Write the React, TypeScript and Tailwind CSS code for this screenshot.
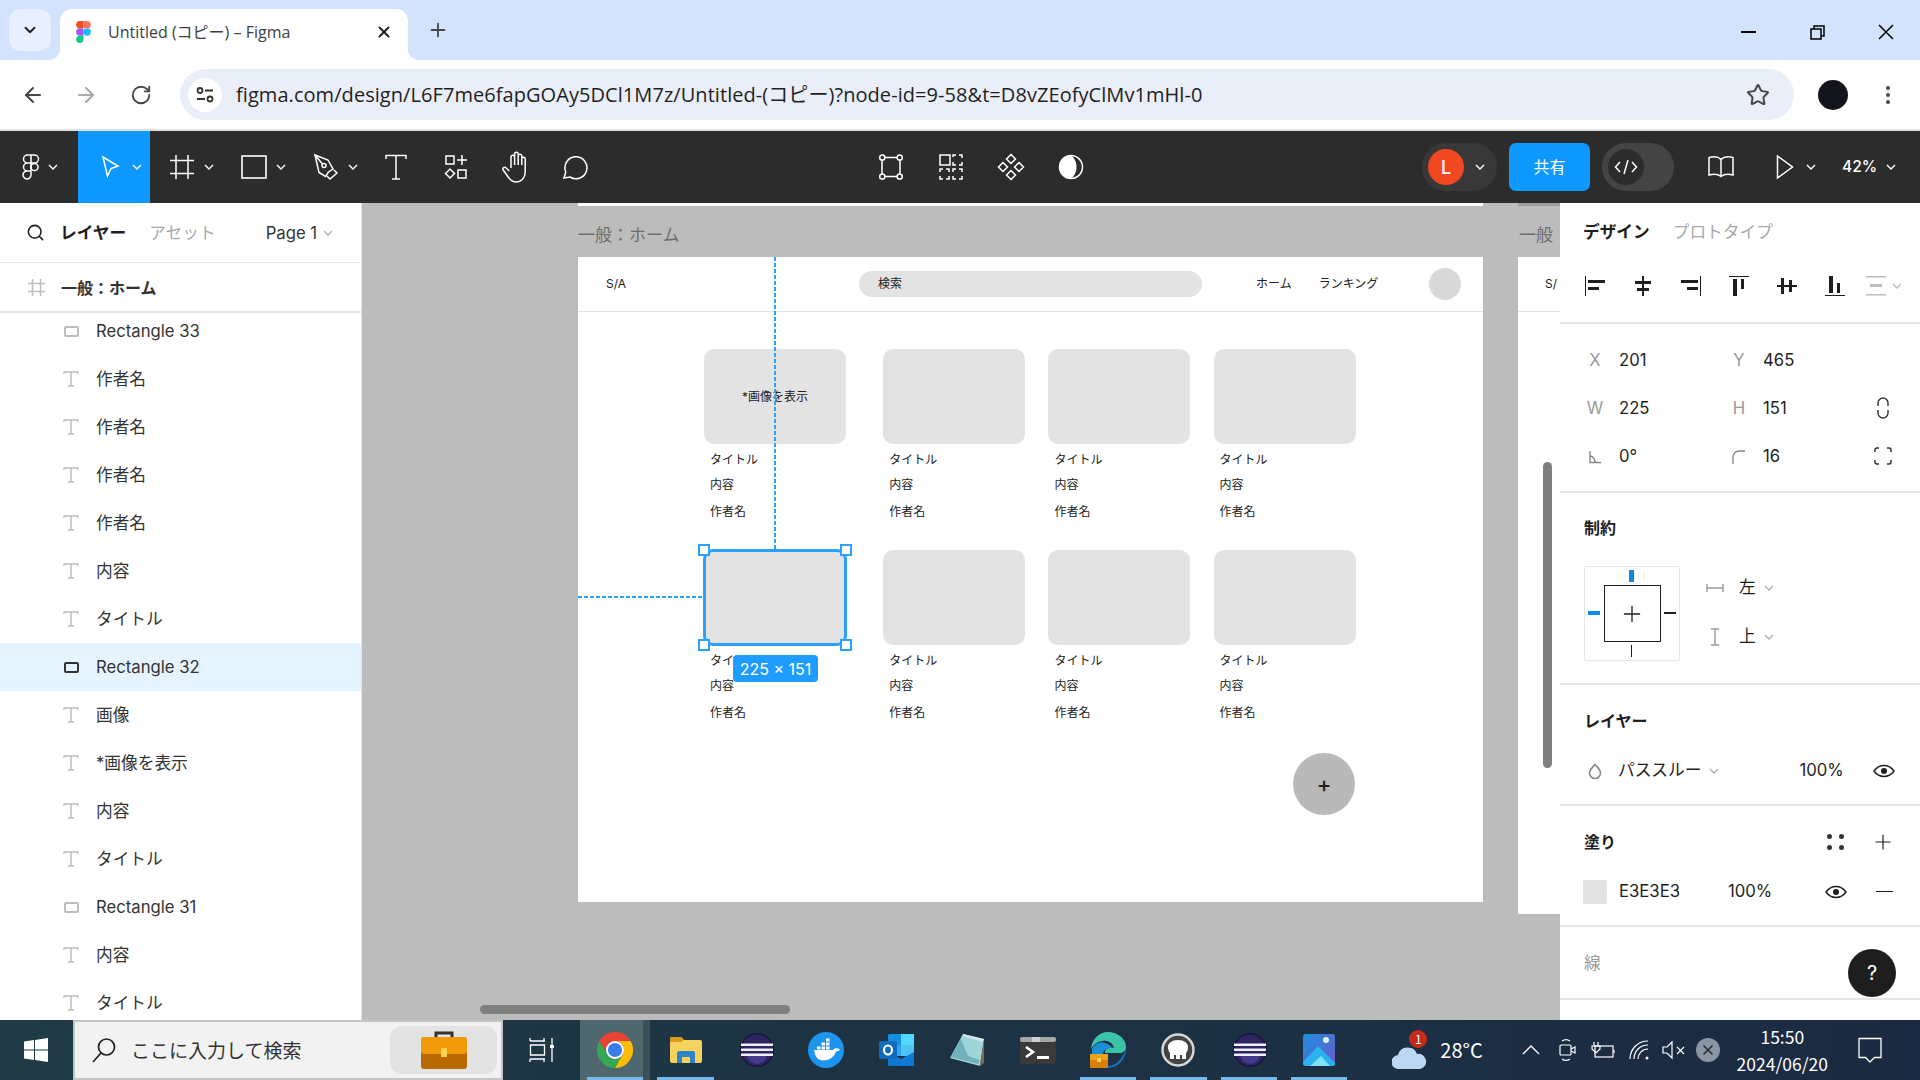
import { ReactNode } from 'react';
import { ChevronDown, ArrowLeft, ArrowRight, RotateCw, Plus, X, Star, Search } from 'lucide-react';

const figmaFont = "font-['Inter','Noto_Sans_CJK_JP',sans-serif]";

const Chev = ({ className = 'text-white', size = 14 }: { className?: string; size?: number }) => (
  <svg width={size} height={size} viewBox="0 0 14 14" fill="none" stroke="currentColor" strokeWidth="1.4" className={className}>
    <path d="M3 5l4 4 4-4" />
  </svg>
);

const Ico = ({ w = 26, h = 26, children, className = 'text-white' }: { w?: number; h?: number; children: ReactNode; className?: string }) => (
  <svg width={w} height={h} viewBox={`0 0 ${w} ${h}`} fill="none" stroke="currentColor" strokeWidth="1.5" className={className}>
    {children}
  </svg>
);

const ToolBtn = ({ icon, chevron, active }: { icon: ReactNode; chevron?: boolean; active?: boolean }) => (
  <div className={`relative flex h-full shrink-0 items-center justify-center ${chevron ? 'w-[72px] pr-[9px]' : 'w-[60px]'} ${active ? 'bg-[#0d99ff]' : ''}`}>
    {icon}
    {chevron && <Chev className="absolute left-[52px] text-white" />}
  </div>
);

const FigmaMark = () => (
  <Ico w={18} h={26}>
    <path d="M9 1H5.5a4 4 0 0 0 0 8H9zM9 1h3.5a4 4 0 0 1 0 8H9zM9 9H5.5a4 4 0 0 0 0 8H9zM9 17H5.5a4 4 0 1 0 3.5 4z" />
    <circle cx="12.5" cy="13" r="3.6" />
  </Ico>
);

const TabStrip = () => (
  <div className="flex h-[60px] shrink-0 items-end bg-[#d3e3fd] pl-[9px]">
    <div className="mb-[9px] flex h-[42px] w-[42px] items-center justify-center rounded-[12px] bg-[#e9f0fd]">
      <ChevronDown size={18} strokeWidth={2.5} className="text-[#1f1f1f]" />
    </div>
    <div className="relative ml-[9px] flex h-[51px] w-[348px] items-center rounded-t-[12px] bg-white pb-[6px] pl-[16px]">
      <span className="absolute bottom-0 left-[-12px] h-[12px] w-[12px] bg-[radial-gradient(circle_at_0_0,transparent_12px,white_12.5px)]" />
      <span className="absolute bottom-0 right-[-12px] h-[12px] w-[12px] bg-[radial-gradient(circle_at_100%_0,transparent_12px,white_12.5px)]" />
      <svg width="15" height="22" viewBox="0 0 16 24">
        <path d="M8 0H4a4 4 0 0 0 0 8h4z" fill="#f24e1e" />
        <path d="M8 0h4a4 4 0 0 1 0 8H8z" fill="#ff7262" />
        <path d="M8 8H4a4 4 0 0 0 0 8h4z" fill="#a259ff" />
        <circle cx="12" cy="12" r="4" fill="#1abcfe" />
        <path d="M4 16h4v4a4 4 0 1 1-4-4z" fill="#0acf83" />
      </svg>
      <span className="ml-[17px] font-['Open_Sans','Noto_Sans_CJK_JP',sans-serif] text-[16px] text-[#3c4043]">Untitled (コピー) – Figma</span>
      <X size={18} strokeWidth={2.5} className="absolute left-[315px] text-[#1f1f1f]" />
    </div>
    <Plus size={22} strokeWidth={2} className="mb-[19px] ml-[19px] text-[#444746]" />
    <div className="mb-[20px] ml-auto flex items-center pr-[1px] text-black">
      <div className="flex w-[69px] justify-center">
        <span className="h-[2px] w-[15px] bg-black" />
      </div>
      <div className="flex w-[69px] justify-center">
        <svg width="15" height="15" viewBox="0 0 15 15" fill="none" stroke="currentColor" strokeWidth="1.5">
          <rect x="1" y="4" width="10" height="10" />
          <path d="M4 4V1h10v10h-3" />
        </svg>
      </div>
      <div className="flex w-[67px] justify-center">
        <svg width="16" height="16" viewBox="0 0 16 16" stroke="currentColor" strokeWidth="1.5">
          <path d="M1 1l14 14M15 1L1 15" />
        </svg>
      </div>
    </div>
  </div>
);

const AddressBar = () => (
  <div className="flex h-[71px] shrink-0 items-center rounded-t-[12px] border-b-2 border-[#e1e1e1] bg-white">
    <ArrowLeft size={24} strokeWidth={2} className="ml-[21px] text-[#474747]" />
    <ArrowRight size={24} strokeWidth={2} className="ml-[29px] text-[#a9a9a9]" />
    <RotateCw size={22} strokeWidth={2} className="ml-[32px] text-[#474747]" />
    <div className="ml-[28px] flex h-[51px] w-[1614px] items-center rounded-full bg-[#e9eef8] pl-[8px]">
      <div className="flex h-[34px] w-[34px] items-center justify-center rounded-full bg-white">
        <svg width="20" height="18" viewBox="0 0 20 18" fill="none" stroke="#333" strokeWidth="1.8">
          <circle cx="5" cy="4.5" r="2.5" />
          <path d="M10 4.5h8M2 13h8" />
          <circle cx="15" cy="13" r="2.5" />
        </svg>
      </div>
      <span className="ml-[14px] font-['Open_Sans','Noto_Sans_CJK_JP',sans-serif] text-[20px] tracking-[0.06px] whitespace-nowrap text-[#1f1f1f]">
        figma.com/design/L6F7me6fapGOAy5DCl1M7z/Untitled-(コピー)?node-id=9-58&amp;t=D8vZEofyClMv1mHl-0
      </span>
      <Star size={24} strokeWidth={2} className="ml-auto mr-[24px] text-[#474747]" />
    </div>
    <span className="ml-[24px] h-[30px] w-[30px] rounded-full bg-[#14141c]" />
    <div className="ml-[38px] flex flex-col gap-[3px]">
      <span className="h-[4px] w-[4px] rounded-full bg-[#474747]" />
      <span className="h-[4px] w-[4px] rounded-full bg-[#474747]" />
      <span className="h-[4px] w-[4px] rounded-full bg-[#474747]" />
    </div>
  </div>
);

const Toolbar = () => (
  <div className={`flex h-[72px] shrink-0 items-center bg-[#2c2c2c] ${figmaFont}`}>
    <div className="relative flex h-full w-[78px] items-center pl-[22px]">
      <FigmaMark />
      <Chev className="absolute left-[46px] text-white" />
    </div>
    <ToolBtn
      active
      chevron
      icon={
        <Ico w={20} h={24}>
          <path d="M3 2l15 9-7 2.5L7.5 21z" />
        </Ico>
      }
    />
    <ToolBtn
      chevron
      icon={
        <Ico w={24} h={26}>
          <path d="M6 1v24M18 1v24M0 6.5h24M0 19.5h24" />
        </Ico>
      }
    />
    <ToolBtn
      chevron
      icon={
        <Ico w={26} h={24}>
          <rect x="1" y="1" width="24" height="22" strokeWidth="1.6" />
        </Ico>
      }
    />
    <ToolBtn
      chevron
      icon={
        <Ico w={26} h={28}>
          <path d="M2 2l13 5 5 9-4.5 3-3 4.5-6.5-4zM2 2l7.5 9" />
          <circle cx="11" cy="12.5" r="2" />
          <path d="M14 23l3 3 7-6-3-3" />
        </Ico>
      }
    />
    <ToolBtn
      icon={
        <Ico w={22} h={26}>
          <path d="M1 5V1.5h20V5M11 1.5V25M7 25h8" />
        </Ico>
      }
    />
    <ToolBtn
      icon={
        <Ico w={24} h={26}>
          <rect x="2" y="2" width="8" height="8" />
          <path d="M18 1v10M13 6h10" />
          <path d="M6 15l4.5 4.5L6 24l-4.5-4.5z" />
          <rect x="14" y="16" width="8" height="8" />
        </Ico>
      }
    />
    <div className="flex h-full w-[60px] shrink-0 items-center justify-center pr-[2px]">
      <Ico w={26} h={32}>
        <path d="M9 17V6a1.8 1.8 0 0 1 3.6 0v8-11a1.8 1.8 0 0 1 3.6 0v11-9a1.8 1.8 0 0 1 3.6 0v9-6a1.7 1.7 0 0 1 3.4 0v13c0 6-4 10-9 10-4 0-6-2-8-5l-5-7c-1.4-2 1.4-3.5 3-2l3 3" />
      </Ico>
    </div>
    <div className="flex h-full w-[60px] shrink-0 items-center justify-center pr-[5px]">
      <Ico w={28} h={28}>
        <path d="M4 25l1.8-6A11 11 0 1 1 10 24z" />
      </Ico>
    </div>
    <div className="ml-[255px] flex h-full">
      <ToolBtn
        icon={
          <Ico w={24} h={26}>
            <path d="M6 3.5h12M6 22.5h12M3 6v14M21 6v14" />
            <circle cx="3.3" cy="3.5" r="2.6" />
            <circle cx="20.7" cy="3.5" r="2.6" />
            <circle cx="3.3" cy="22.5" r="2.6" />
            <circle cx="20.7" cy="22.5" r="2.6" />
          </Ico>
        }
      />
      <ToolBtn
        icon={
          <Ico w={24} h={26}>
            <rect x="1" y="1" width="10" height="10" />
            <path d="M14 3V1h3M20 1h3v3M23 8v3h-3M17 11h-3V8M1 18v-3h3M7 15h3v3M10 22v3H7M4 25H1v-3M14 18v-3h3M20 15h3v3M23 22v3h-3M17 25h-3v-3" />
          </Ico>
        }
      />
      <ToolBtn
        icon={
          <Ico w={28} h={28}>
            <path d="M14 1.5L18.5 6 14 10.5 9.5 6zM14 17.5l4.5 4.5-4.5 4.5L9.5 22zM6 9.5l4.5 4.5L6 18.500 1.500 14zM22 9.5l4.5 4.5-4.5 4.5-4.5-4.5z" />
          </Ico>
        }
      />
      <ToolBtn
        icon={
          <svg width="26" height="26" viewBox="0 0 26 26" fill="none">
            <circle cx="13" cy="13" r="11.5" stroke="white" strokeWidth="1.5" />
            <path d="M13 1.5A11.5 11.5 0 0 0 13 24.500C17 22 18.5 17 18.5 13S17 4 13 1.5z" fill="white" />
          </svg>
        }
      />
    </div>
    <div className="ml-[321px] flex h-[48px] w-[75px] items-center rounded-full bg-[#383838] pl-[6px]">
      <span className="flex h-[36px] w-[36px] items-center justify-center rounded-full bg-[#f24822] text-[18px] font-medium text-white">L</span>
      <Chev className="ml-[9px] text-white" />
    </div>
    <div className="ml-[12px] flex h-[48px] w-[81px] items-center justify-center rounded-[7px] bg-[#0d99ff] text-[16px] text-white">共有</div>
    <div className="ml-[12px] flex h-[48px] w-[72px] items-center rounded-full bg-[#444444] pl-[6px]">
      <span className="flex h-[36px] w-[36px] items-center justify-center rounded-full bg-[#2c2c2c]">
        <svg width="24" height="16" viewBox="0 0 24 16" fill="none" stroke="white" strokeWidth="1.5">
          <path d="M6 3L1.5 8 6 13M18 3l4.5 5L18 13M14 1l-4 14" />
        </svg>
      </span>
    </div>
    <div className="ml-[33px]">
      <Ico w={28} h={24}>
        <path d="M14 4.5C11 1.5 6 1.5 2 2.5V20c4-1 9-1 12 1.5C17 19 22 19 26 20V2.5C22 1.5 17 1.5 14 4.5zM14 4.5v17" />
      </Ico>
    </div>
    <div className="ml-[41px]">
      <Ico w={18} h={26}>
        <path d="M1.5 2l15 11-15 11z" />
      </Ico>
    </div>
    <Chev className="ml-[10px] text-white" />
    <span className="ml-[24px] text-[15.5px] font-medium text-white">42%</span>
    <Chev className="ml-[7px] text-white" />
  </div>
);

const RectIcon = ({ dark }: { dark?: boolean }) => (
  <span className={`h-[11px] w-[15px] rounded-[2px] border-2 ${dark ? 'border-[#333333]' : 'border-[#bdbdbd]'}`} />
);

const TextIcon = () => (
  <svg width="16" height="16" viewBox="0 0 16 16" fill="none" stroke="#bdbdbd" strokeWidth="1.4">
    <path d="M1 3V1h14v2M8 1v14M5 15h6" />
  </svg>
);

const layers: { name: string; kind: 'rect' | 'text'; selected?: boolean }[] = [
  { name: 'Rectangle 33', kind: 'rect' },
  { name: '作者名', kind: 'text' },
  { name: '作者名', kind: 'text' },
  { name: '作者名', kind: 'text' },
  { name: '作者名', kind: 'text' },
  { name: '内容', kind: 'text' },
  { name: 'タイトル', kind: 'text' },
  { name: 'Rectangle 32', kind: 'rect', selected: true },
  { name: '画像', kind: 'text' },
  { name: '*画像を表示', kind: 'text' },
  { name: '内容', kind: 'text' },
  { name: 'タイトル', kind: 'text' },
  { name: 'Rectangle 31', kind: 'rect' },
  { name: '内容', kind: 'text' },
  { name: 'タイトル', kind: 'text' },
];

const LayersPanel = () => (
  <aside className={`flex w-[362px] shrink-0 flex-col overflow-hidden border-r border-[#e6e6e6] bg-white ${figmaFont}`}>
    <div className="flex h-[60px] shrink-0 items-center border-b border-[#e6e6e6] pl-[26px]">
      <Search size={19} strokeWidth={2} className="text-[#1e1e1e]" />
      <span className="ml-[15px] mt-[2px] text-[16.7px] font-bold text-[#1e1e1e]">レイヤー</span>
      <span className="ml-[23px] mt-[2px] text-[16.7px] text-[#a8a8a8]">アセット</span>
      <span className="ml-[50px] mt-[2px] text-[16.7px] text-[#333333]">Page 1</span>
      <Chev className="ml-[4px] text-[#b0b0b0]" />
    </div>
    <div className="z-10 flex h-[50px] shrink-0 items-center border-b-2 border-[#e6e6e6] bg-white pl-[28px]">
      <svg width="17" height="17" viewBox="0 0 17 17" fill="none" stroke="#bdbdbd" strokeWidth="1.5">
        <path d="M4.5 0v17M12.5 0v17M0 4.5h17M0 12.5h17" />
      </svg>
      <span className="ml-[16px] mt-[1px] text-[16px] font-bold text-[#333333]">一般：ホーム</span>
    </div>
    <div className="mt-[-6px] flex flex-col">
      {layers.map((l, i) => (
        <div key={i} className={`flex h-[48px] shrink-0 items-center ${l.selected ? 'bg-[#e5f4ff]' : ''}`}>
          <span className="flex w-[96px] justify-center pl-[47px] pr-[1px]">
            {l.kind === 'rect' ? <RectIcon dark={l.selected} /> : <TextIcon />}
          </span>
          <span className="mt-[2px] text-[16.7px] text-[#333333]">{l.name}</span>
        </div>
      ))}
    </div>
  </aside>
);

const Card = ({ image, wide }: { image?: string; wide?: boolean }) => (
  <div className={`w-[142px] shrink-0 ${wide ? 'mr-[14px]' : ''}`}>
    <div className="flex h-[95px] items-center justify-center rounded-[10px] bg-[#e3e3e3] text-[12px] text-[#222222]">{image}</div>
    <div className="flex flex-col pl-[6px] text-[12px] leading-[18px] text-[#222222]">
      <span className="mt-[7px]">タイトル</span>
      <span className="mt-[7px]">内容</span>
      <span className="mt-[9px]">作者名</span>
    </div>
  </div>
);

const Handle = ({ className }: { className: string }) => (
  <span className={`absolute h-[12px] w-[12px] border-2 border-[#2ba0ff] bg-white ${className}`} />
);

const DesignFrame = () => (
  <div className={`absolute left-[216px] top-[54px] h-[645px] w-[905px] bg-white ${figmaFont}`}>
    <div className="flex h-[55px] items-center border-b border-[#e3e3e3] text-[12px] text-[#222222]">
      <span className="ml-[28px]">S/A</span>
      <div className="ml-[233px] flex h-[26px] w-[343px] items-center rounded-full bg-[#e3e3e3] pl-[19px]">検索</div>
      <span className="ml-[54px]">ホーム</span>
      <span className="ml-[27px]">ランキング</span>
      <span className="ml-[51px] h-[32px] w-[32px] rounded-full bg-[#d9d9d9]" />
    </div>
    <div className="ml-[126px] w-[651px] pt-[37px]">
      <div className="flex gap-[23.2px]">
        <Card image="*画像を表示" wide />
        <Card />
        <Card />
        <Card />
      </div>
      <div className="mt-[29px] flex gap-[23.2px]">
        <div className="relative">
          <Card wide />
          <span className="absolute left-[-1px] top-[-1px] h-[97px] w-[144px] rounded-[10px] border-[3px] border-[#2ba0ff]" />
          <Handle className="left-[-6px] top-[-6px]" />
          <Handle className="left-[136px] top-[-6px]" />
          <Handle className="left-[-6px] top-[89px]" />
          <Handle className="left-[136px] top-[89px]" />
          <span className="absolute left-[29px] top-[105px] flex h-[27px] w-[85px] items-center justify-center rounded-[4px] bg-[#1f9cff] text-[16px] text-white">225 × 151</span>
        </div>
        <Card />
        <Card />
        <Card />
      </div>
      <div className="mt-[31px] flex justify-end">
        <span className="flex h-[62px] w-[62px] items-center justify-center rounded-full bg-[#b9b9b9] text-[22px] font-medium text-[#222222]">+</span>
      </div>
    </div>
    <span className="absolute left-[196px] top-0 h-[292px] w-[2px] bg-[repeating-linear-gradient(to_bottom,#2ba0ff_0_4px,transparent_4px_6px)]" />
    <span className="absolute left-0 top-[339px] h-[2px] w-[125px] bg-[repeating-linear-gradient(to_right,#2ba0ff_0_4px,transparent_4px_6px)]" />
  </div>
);

const Canvas = () => (
  <main className="relative flex-1 overflow-hidden bg-[#bcbcbc]">
    <span className="absolute left-[216px] top-0 h-[3px] w-[905px] bg-white" />
    <span className="absolute left-[1156px] top-0 h-[3px] w-[42px] bg-[#9f9f9f]" />
    <span className={`absolute left-[216px] top-[20px] text-[17px] text-[#6e6e6e] ${figmaFont}`}>一般：ホーム</span>
    <DesignFrame />
    <span className={`absolute left-[1157px] top-[20px] text-[17px] text-[#6e6e6e] ${figmaFont}`}>一般</span>
    <div className={`absolute left-[1156px] top-[54px] h-[657px] w-[42px] bg-white ${figmaFont}`}>
      <div className="flex h-[55px] items-center border-b border-[#e3e3e3] pl-[27px] text-[12px] text-[#222222]">S/</div>
    </div>
    <span className="absolute left-[1181px] top-[259px] h-[306px] w-[9px] rounded-full bg-[#7f7f7f]" />
    <span className="absolute bottom-[6px] left-[118px] h-[9px] w-[310px] rounded-full bg-[#7f7f7f]" />
  </main>
);

const Section = ({ className, children }: { className: string; children: ReactNode }) => (
  <section className={`shrink-0 border-b-2 border-[#e6e6e6] ${className}`}>{children}</section>
);

const AlignIcon = ({ children, className = 'text-[#1e1e1e]' }: { children: ReactNode; className?: string }) => (
  <span className={`flex w-[48px] justify-center ${className}`}>
    <svg width="22" height="22" viewBox="0 0 22 22" fill="currentColor">
      {children}
    </svg>
  </span>
);

const Prop = ({ label, value }: { label: ReactNode; value: string }) => (
  <div className="flex w-[144px] items-center">
    <span className="ml-[23px] mt-[2px] flex w-[24px] justify-center text-[16.7px] text-[#999999]">{label}</span>
    <span className="ml-[12px] mt-[2px] text-[16.7px] text-[#1e1e1e]">{value}</span>
  </div>
);

const Eye = () => (
  <svg width="22" height="14" viewBox="0 0 22 14" fill="none" stroke="#1e1e1e" strokeWidth="1.5">
    <path d="M1 7c2.5-3.5 6-5.5 10-5.5S18.5 3.5 21 7c-2.5 3.5-6 5.5-10 5.5S3.5 10.5 1 7z" />
    <circle cx="11" cy="7" r="3" fill="#1e1e1e" stroke="none" />
  </svg>
);

const PropertiesPanel = () => (
  <aside className={`relative flex w-[360px] shrink-0 flex-col bg-white text-[#1e1e1e] ${figmaFont}`}>
    <Section className="h-[121px]">
      <div className="flex h-[58px] items-center pl-[23px] pt-[2px] text-[16.7px]">
        <span className="font-bold">デザイン</span>
        <span className="ml-[23px] text-[#a8a8a8]">プロトタイプ</span>
      </div>
      <div className="flex h-[50px] items-center pl-[11px]">
        <AlignIcon>
          <rect x="1" y="1" width="1" height="20" />
          <rect x="4" y="5" width="17" height="3" />
          <rect x="4" y="12" width="11" height="3" />
        </AlignIcon>
        <AlignIcon>
          <rect x="10" y="1" width="2" height="20" />
          <rect x="3" y="6" width="16" height="3" />
          <rect x="5" y="13" width="12" height="3" />
        </AlignIcon>
        <AlignIcon>
          <rect x="20" y="1" width="1" height="20" />
          <rect x="1" y="5" width="17" height="3" />
          <rect x="7" y="12" width="11" height="3" />
        </AlignIcon>
        <AlignIcon>
          <rect x="1" y="1" width="20" height="1" />
          <rect x="5" y="4" width="4" height="17" />
          <rect x="13" y="4" width="3" height="10" />
        </AlignIcon>
        <AlignIcon>
          <rect x="1" y="10" width="20" height="2" />
          <rect x="5" y="3" width="3" height="16" />
          <rect x="13" y="5" width="3" height="12" />
        </AlignIcon>
        <AlignIcon>
          <rect x="1" y="20" width="20" height="1" />
          <rect x="5" y="1" width="4" height="17" />
          <rect x="13" y="8" width="3" height="10" />
        </AlignIcon>
        <span className="flex w-[34px] justify-center text-[#bdbdbd]">
          <svg width="20" height="20" viewBox="0 0 20 20" fill="currentColor">
            <rect x="0" y="0" width="20" height="1.5" />
            <rect x="4" y="8" width="12" height="3" />
            <rect x="0" y="18" width="20" height="1.5" />
          </svg>
        </span>
        <Chev className="ml-[-3px] text-[#bdbdbd]" />
      </div>
    </Section>
    <Section className="flex h-[169px] flex-col pt-[12px]">
      <div className="flex h-[48px] items-center">
        <Prop label="X" value="201" />
        <Prop label="Y" value="465" />
      </div>
      <div className="flex h-[48px] items-center">
        <Prop label="W" value="225" />
        <Prop label="H" value="151" />
        <span className="flex w-[72px] justify-center pr-[2px]">
          <svg width="12" height="22" viewBox="0 0 12 22" fill="none" stroke="#333" strokeWidth="1.4">
            <path d="M1 9V6a5 5 0 0 1 10 0v3M1 13v3a5 5 0 0 0 10 0v-3" />
          </svg>
        </span>
      </div>
      <div className="flex h-[48px] items-center">
        <Prop
          label={
            <svg width="14" height="14" viewBox="0 0 14 14" fill="none" stroke="#888" strokeWidth="1.4">
              <path d="M2 1v11.5h11M2 6c3 0 5 3 5 6.5" />
            </svg>
          }
          value="0°"
        />
        <Prop
          label={
            <svg width="14" height="14" viewBox="0 0 14 14" fill="none" stroke="#888" strokeWidth="1.4">
              <path d="M1 14V7a6 6 0 0 1 6-6h6" />
            </svg>
          }
          value="16"
        />
        <span className="flex w-[72px] justify-center pr-[2px]">
          <svg width="18" height="18" viewBox="0 0 18 18" fill="none" stroke="#333" strokeWidth="1.5">
            <path d="M1 5V3a2 2 0 0 1 2-2h2M13 1h2a2 2 0 0 1 2 2v2M17 13v2a2 2 0 0 1-2 2h-2M5 17H3a2 2 0 0 1-2-2v-2" />
          </svg>
        </span>
      </div>
    </Section>
    <Section className="flex h-[192px] flex-col pl-[24px]">
      <h3 className="mt-[23px] h-[24px] text-[16px] font-bold leading-[24px]">制約</h3>
      <div className="mt-[26px] flex">
        <div className="relative flex h-[95px] w-[96px] items-center justify-center rounded-[2px] border border-[#e6e6e6]">
          <div className="flex h-[57px] w-[57px] items-center justify-center border border-[#1e1e1e]">
            <Plus size={26} strokeWidth={1.2} />
          </div>
          <span className="absolute left-[44px] top-[3px] h-[12px] w-[5px] bg-[#0c8ce9]" />
          <span className="absolute left-[3px] top-[44px] h-[4px] w-[12px] bg-[#0c8ce9]" />
          <span className="absolute right-[3px] top-[45px] h-[2px] w-[12px] bg-[#1e1e1e]" />
          <span className="absolute bottom-[3px] left-[46px] h-[12px] w-[1px] bg-[#1e1e1e]" />
        </div>
        <div className="ml-[26px] mt-[-2px] flex flex-col text-[16.7px]">
          <div className="flex h-[48px] items-center">
            <svg width="18" height="10" viewBox="0 0 18 10" stroke="#999" strokeWidth="1.4">
              <path d="M1 1v8M17 1v8M1 5h16" />
            </svg>
            <span className="ml-[15px]">左</span>
            <Chev className="ml-[6px] text-[#b0b0b0]" />
          </div>
          <div className="flex h-[49px] items-center pt-[1px]">
            <svg width="18" height="18" viewBox="0 0 18 18" stroke="#999" strokeWidth="1.4">
              <path d="M5 1h8M5 17h8M9 1v16" />
            </svg>
            <span className="ml-[15px]">上</span>
            <Chev className="ml-[6px] text-[#b0b0b0]" />
          </div>
        </div>
      </div>
    </Section>
    <Section className="flex h-[121px] flex-col">
      <h3 className="mt-[24px] h-[24px] pl-[24px] text-[16px] font-bold leading-[24px]">レイヤー</h3>
      <div className="mt-[25px] flex items-center pl-[28px] text-[16.7px]">
        <svg width="14" height="16" viewBox="0 0 14 16" fill="none" stroke="#888" strokeWidth="1.6">
          <path d="M7 1.5C5 4 1.5 6.5 1.5 10a5.5 5.5 0 0 0 11 0C12.5 6.5 9 4 7 1.5z" />
        </svg>
        <span className="ml-[16px]">パススルー</span>
        <Chev className="ml-[6px] text-[#b0b0b0]" />
        <span className="ml-[78px]">100%</span>
        <span className="ml-[29px]">
          <Eye />
        </span>
      </div>
    </Section>
    <Section className="flex h-[121px] flex-col">
      <div className="mt-[24px] flex h-[24px] items-center pl-[24px]">
        <h3 className="text-[16px] font-bold">塗り</h3>
        <div className="ml-[211px] grid grid-cols-2 gap-x-[7px] gap-y-[6px]">
          <span className="h-[5px] w-[5px] rounded-full bg-[#333333]" />
          <span className="h-[5px] w-[5px] rounded-full bg-[#333333]" />
          <span className="h-[5px] w-[5px] rounded-full bg-[#333333]" />
          <span className="h-[5px] w-[5px] rounded-full bg-[#333333]" />
        </div>
        <Plus size={24} strokeWidth={1.2} className="ml-[27px]" />
      </div>
      <div className="mt-[25px] flex items-center pl-[23px] text-[16.7px]">
        <span className="h-[24px] w-[24px] rounded-[2px] bg-[#e3e3e3]" />
        <span className="ml-[12px] w-[109px]">E3E3E3</span>
        <span>100%</span>
        <span className="ml-[53px]">
          <Eye />
        </span>
        <span className="ml-[29px] h-[1.5px] w-[17px] bg-[#1e1e1e]" />
      </div>
    </Section>
    <Section className="flex h-[73px] items-start pl-[24px] pt-[24px] text-[16.7px] text-[#999999]">
      <span>線</span>
    </Section>
    <span className="absolute left-[288px] top-[746px] flex h-[48px] w-[48px] items-center justify-center rounded-full bg-[#1e1e1e] text-[20px] text-white">?</span>
  </aside>
);

const TaskIcon = ({ children, open, active }: { children: ReactNode; open?: boolean; active?: boolean }) => (
  <div className={`relative flex h-full w-[70.4px] shrink-0 items-center justify-center ${active ? 'bg-[#4f6870]' : ''}`}>
    {children}
    {open && <span className="absolute bottom-0 left-[7px] right-[7px] h-[3px] bg-[#76b9ed]" />}
  </div>
);

const ChromeIcon = () => (
  <svg width="36" height="36" viewBox="2 2 32 32">
    <path d="M31.86 10H18a8 8 0 0 0-6.93 12L4.14 10A16 16 0 0 1 31.86 10z" fill="#ea4335" />
    <path d="M4.14 10l6.93 12a8 8 0 0 0 13.86 0L18 34A16 16 0 0 1 4.14 10z" fill="#34a853" />
    <path d="M18 34l6.93-12a8 8 0 0 0-6.93-12h13.86A16 16 0 0 1 18 34z" fill="#fbbc04" />
    <circle cx="18" cy="18" r="8" fill="white" />
    <circle cx="18" cy="18" r="6.3" fill="#3b7de8" />
  </svg>
);

const EclipseIcon = () => (
  <svg width="36" height="36" viewBox="0 0 36 36">
    <path d="M16 0.5A17.5 17.5 0 0 0 16 35.5A17 17 0 0 1 16 0.5z" fill="#f7941e" />
    <circle cx="19" cy="18" r="17" fill="#17153a" />
    <circle cx="19" cy="18" r="15.5" fill="#2d2460" />
    <path d="M9 22a10 10 0 0 0 20 0z" fill="#463a8c" />
    <rect x="3" y="11.5" width="32" height="2.5" fill="#f0eef8" />
    <rect x="3" y="16.5" width="32" height="2.5" fill="#f0eef8" />
    <rect x="3" y="21.5" width="32" height="2.5" fill="#f0eef8" />
  </svg>
);

const Taskbar = () => (
  <footer className="flex h-[60px] shrink-0 items-stretch bg-linear-to-r from-[#1f3b45] to-[#1b2a42] font-['Noto_Sans_CJK_JP',sans-serif] text-white">
    <div className="flex w-[73px] items-center justify-center pr-[1px]">
      <svg width="24" height="24" viewBox="0 0 24 24" fill="white">
        <path d="M0 3.5l10-1.400v9.300H0zM11 2l13-2v11.400H11zM0 12.500h10v9.400L0 20.500zM11 12.500h13V24l-13-1.900z" />
      </svg>
    </div>
    <div className="flex w-[430px] items-center border-2 border-[#c5c5c5] bg-[#f2f2f2] pl-[16px] text-[19px] text-[#333333]">
      <svg width="26" height="26" viewBox="0 0 26 26" fill="none" stroke="#222" strokeWidth="1.7">
        <circle cx="15.5" cy="10" r="8" />
        <path d="M10 16L2 25" />
      </svg>
      <span className="ml-[14px]">ここに入力して検索</span>
      <div className="ml-auto mr-[4px] flex h-[48px] w-[107px] items-center justify-center rounded-[12px] bg-[#e3e3e3]">
        <svg width="46" height="38" viewBox="0 0 46 38">
          <path d="M15 6V2h16v4" fill="none" stroke="#333" strokeWidth="3" />
          <rect x="0" y="6" width="46" height="32" rx="3" fill="#b86a00" />
          <rect x="0" y="6" width="46" height="17" rx="3" fill="#f09a0a" />
          <rect x="20" y="17" width="6" height="9" fill="#ffd24d" />
        </svg>
      </div>
    </div>
    <div className="flex w-[77px] items-center justify-center">
      <svg width="26" height="24" viewBox="0 0 26 24" fill="none" stroke="white" strokeWidth="1.3">
        <path d="M1 3h15M15 3V0M1 3V0M1.5 7h14v10h-14zM1 21h15M1 21v3M15 21v3M23 0v24" />
        <rect x="21" y="7" width="4" height="3" fill="white" stroke="none" />
      </svg>
    </div>
    <TaskIcon active open>
      <ChromeIcon />
      <span className="absolute right-0 top-0 h-full w-[7px] bg-[#3a5158]" />
    </TaskIcon>
    <TaskIcon open>
      <svg width="32" height="26" viewBox="0 0 32 26">
        <path d="M0 2a2 2 0 0 1 2-2h9l3 3h16a2 2 0 0 1 2 2v19a2 2 0 0 1-2 2H2a2 2 0 0 1-2-2z" fill="#f7d25e" />
        <path d="M0 2a2 2 0 0 1 2-2h9l3 3-3 2H0z" fill="#d99b1d" />
        <path d="M7 26V16a2 2 0 0 1 2-2h14a2 2 0 0 1 2 2v10h-5v-6h-8v6z" fill="#2e82c9" />
      </svg>
    </TaskIcon>
    <TaskIcon>
      <EclipseIcon />
    </TaskIcon>
    <TaskIcon>
      <svg width="36" height="36" viewBox="0 0 36 36">
        <circle cx="18" cy="18" r="18" fill="#1d94ee" />
        <path d="M6 18h19c1-1.5 3-2 5-1.5l2 1c-1 1.500-2.500 2-4 2-2 6-7 9-13 9-5 0-8-4-9-10.500z" fill="white" />
        <path d="M9 14.500h3.500v3H9zM13.500 14.500H17v3h-3.500zM18 14.500h3.500v3H18zM13.500 10.500H17v3h-3.500zM18 10.500h3.500v3H18zM18 6.500h3.500v3H18z" fill="white" />
      </svg>
    </TaskIcon>
    <TaskIcon>
      <svg width="36" height="32" viewBox="0 0 36 32">
        <rect x="9" y="0" width="26" height="12" rx="1.5" fill="#1490df" />
        <rect x="22" y="0" width="13" height="12" fill="#50d9ff" />
        <rect x="9" y="11" width="13" height="11" fill="#28a8ea" />
        <rect x="22" y="11" width="13" height="11" fill="#50c5f5" />
        <path d="M9 18l13 7 13-7v13a1 1 0 0 1-1 1H10a1 1 0 0 1-1-1z" fill="#0f78d4" />
        <rect x="0" y="7" width="18" height="18" rx="2" fill="#0f6cbd" />
        <ellipse cx="9" cy="16" rx="4" ry="4.5" fill="none" stroke="white" strokeWidth="2.2" />
      </svg>
    </TaskIcon>
    <TaskIcon>
      <svg width="34" height="32" viewBox="0 0 34 32">
        <path d="M13 0l21 5-4 27L0 24z" fill="#9fd6dc" />
        <path d="M13 0l21 5-1 3-20-6z" fill="#d8e6e8" />
        <path d="M11 5L1 23l27 7 2-4-12-4z" fill="#6fb2bc" />
        <path d="M30 32l4-27 0 24z" fill="#7d6b4a" />
      </svg>
    </TaskIcon>
    <TaskIcon>
      <svg width="36" height="27" viewBox="0 0 36 27">
        <rect x="0" y="0" width="36" height="27" rx="3" fill="#3a3a3a" />
        <rect x="0" y="0" width="36" height="5" rx="2" fill="#a6a6a6" />
        <rect x="12" y="0" width="8" height="5" fill="#d0d0d0" />
        <path d="M6 10l7 5-7 5" fill="none" stroke="white" strokeWidth="2.6" />
        <rect x="17" y="19" width="12" height="3" fill="white" />
      </svg>
    </TaskIcon>
    <TaskIcon open>
      <svg width="36" height="36" viewBox="0 0 36 36">
        <path d="M1 17C2 7 9 0 18 0c10 0 18 7 18 15 0 4-3 6-7 6H15c0-4 4-6 9-5-1-5-6-8-11-7-5 0-9 3-12 8z" fill="#3cc4a8" />
        <path d="M36 17c0 10-8 19-18 19-3 0-6-1-8-2h8c7 0 14-6 18-17z" fill="#1b6fc2" />
        <path d="M2 17c3-5 8-8 13-6 4 1 6 3 7 5-5 0-9 2-9 7H2z" fill="#1a8fd6" />
        <rect x="0" y="22" width="18" height="14" rx="1" fill="#d97f0b" />
        <rect x="0" y="22" width="18" height="6" fill="#f0a020" />
        <rect x="7" y="26" width="4" height="4" fill="#ffd24d" />
      </svg>
    </TaskIcon>
    <TaskIcon open>
      <svg width="34" height="34" viewBox="0 0 34 34">
        <circle cx="17" cy="17" r="15.5" fill="#444" stroke="#d8d8d8" strokeWidth="2.5" />
        <path d="M7 14c0-4 4-7 10-7s10 3 10 7c0 3-1 5-2 6v6h-4v-4h-2v4h-4v-4h-2v4H9v-6c-1-1-2-3-2-6z" fill="white" />
      </svg>
    </TaskIcon>
    <TaskIcon open>
      <EclipseIcon />
    </TaskIcon>
    <TaskIcon open>
      <svg width="32" height="32" viewBox="0 0 32 32">
        <defs>
          <linearGradient id="ph" x1="0" y1="0" x2="1" y2="1">
            <stop offset="0" stopColor="#1f8de0" />
            <stop offset="1" stopColor="#6a5bc8" />
          </linearGradient>
        </defs>
        <rect width="32" height="32" rx="3" fill="url(#ph)" />
        <path d="M0 28L15 12l17 17v1a2 2 0 0 1-2 2H3a3 3 0 0 1-3-3z" fill="#2ab3ee" />
        <path d="M7 32l11-10 9 10z" fill="#7fe3f7" />
        <circle cx="23" cy="6" r="3" fill="#e8eef8" />
      </svg>
    </TaskIcon>
    <div className="relative ml-[36px] flex w-[100px] items-center pl-[2px]">
      <svg width="36" height="24" viewBox="0 0 36 24" className="mt-[14px]">
        <path d="M7 24a7 7 0 0 1-1-14 10 10 0 0 1 19-1 7.5 7.5 0 0 1 3 15z" fill="#bcd6f3" />
      </svg>
      <span className="absolute left-[19px] top-[10px] flex h-[18px] w-[18px] items-center justify-center rounded-full bg-[#c42b1c] text-[12px] leading-none text-white">1</span>
      <span className="ml-[12px] text-[20px]">28°C</span>
    </div>
    <div className="ml-[23px] flex w-[36px] items-center justify-center">
      <svg width="18" height="10" viewBox="0 0 18 10" fill="none" stroke="white" strokeWidth="1.3">
        <path d="M1 9l8-8 8 8" />
      </svg>
    </div>
    <div className="flex w-[36px] items-center justify-center">
      <svg width="18" height="24" viewBox="0 0 18 24" fill="none" stroke="white" strokeWidth="1.2">
        <path d="M4 3a7 7 0 0 1 8 0M4 21a7 7 0 0 0 8 0" />
        <rect x="2" y="7" width="11" height="10" rx="1" />
        <path d="M13 11l4-2v6l-4-2" />
      </svg>
    </div>
    <div className="flex w-[36px] items-center justify-center">
      <svg width="24" height="18" viewBox="0 0 24 18" fill="none" stroke="white" strokeWidth="1.2">
        <rect x="4" y="5" width="18" height="11" />
        <path d="M23 9v3M3 1v4M7 1v4M1 5h8v3l-4 4-4-4z" />
      </svg>
    </div>
    <div className="flex w-[36px] items-center justify-center">
      <svg width="20" height="20" viewBox="0 0 20 20" fill="none" stroke="white" strokeWidth="1.2">
        <path d="M1 19C1 9 9 1 19 1M5 19C5 11 11 5 19 5M9 19c0-5 4-10 10-10" />
        <circle cx="18" cy="18" r="1.5" fill="white" stroke="none" />
      </svg>
    </div>
    <div className="flex w-[34px] items-center justify-center">
      <svg width="24" height="20" viewBox="0 0 24 20" fill="none" stroke="white" strokeWidth="1.2">
        <path d="M1 7h4l5-5v16l-5-5H1zM15 7l7 7M22 7l-7 7" />
      </svg>
    </div>
    <div className="flex w-[34px] items-center justify-center">
      <span className="flex h-[24px] w-[24px] items-center justify-center rounded-full bg-[#8c96a3]">
        <X size={16} strokeWidth={2.5} className="text-[#23303e]" />
      </span>
    </div>
    <div className="flex w-[114px] flex-col items-center justify-center text-[17.5px] leading-[27px]">
      <span className="mt-[-1px]">15:50</span>
      <span>2024/06/20</span>
    </div>
    <div className="ml-[6px] flex w-[50px] items-center justify-center">
      <svg width="26" height="26" viewBox="0 0 26 26" fill="none" stroke="white" strokeWidth="1.3">
        <path d="M2 1.5h22v19h-6.5L13 25l-4.5-4.5H2z" />
      </svg>
    </div>
  </footer>
);

export default function App() {
  return (
    <div className="flex h-[1080px] w-[1920px] flex-col overflow-hidden bg-white">
      <TabStrip />
      <AddressBar />
      <Toolbar />
      <div className="flex min-h-0 flex-1">
        <LayersPanel />
        <Canvas />
        <PropertiesPanel />
      </div>
      <Taskbar />
    </div>
  );
}
